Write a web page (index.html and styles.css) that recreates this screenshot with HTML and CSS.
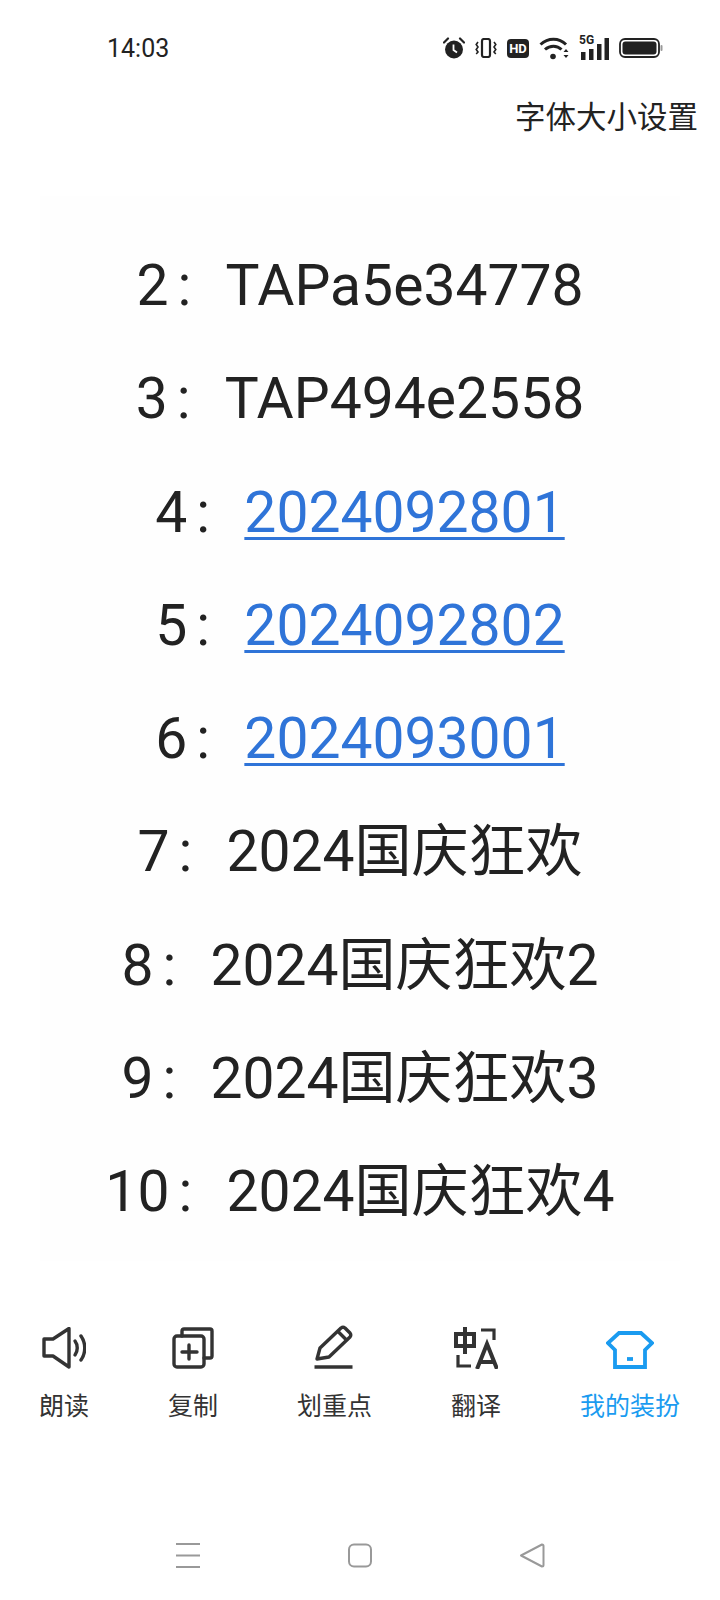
FILE: index.html
```html
<!DOCTYPE html>
<html lang="zh-CN">
<head>
    <meta charset="UTF-8">
    <meta name="viewport" content="width=device-width, initial-scale=1.0">
    <title>字体大小设置</title>
    <link rel="stylesheet" href="styles.css">
</head>
<body>
    <div class="statusbar">
        <span class="time">14:03</span>
        <div class="status-icons">
            <svg class="ico-alarm" viewBox="0 0 22 22" width="22" height="22">
                <circle cx="11" cy="12.5" r="9" fill="#222"/>
                <path d="M1 5.5 L5 1.5 M21 5.5 L17 1.5" stroke="#222" stroke-width="2.2" stroke-linecap="round"/>
                <path d="M10.5 7.5 V13 L14 15.5" stroke="#fff" stroke-width="1.8" fill="none"/>
            </svg>
            <svg class="ico-vib" viewBox="0 0 22 20" width="22" height="20">
                <rect x="7" y="1" width="8" height="18" rx="2" fill="none" stroke="#222" stroke-width="2.2"/>
                <path d="M3 4 L1.2 6.5 L3 9 L1.2 11.5 L3 14 L1.2 16 M19 4 L20.8 6.5 L19 9 L20.8 11.5 L19 14 L20.8 16" fill="none" stroke="#222" stroke-width="1.6"/>
            </svg>
            <span class="hd">HD</span>
            <svg class="ico-wifi" viewBox="0 0 30 23" width="30" height="23">
                <path d="M1.5 7.5 C9 0.5 20 0.5 27 7.5" fill="none" stroke="#222" stroke-width="3"/>
                <path d="M6 12.5 C11 8 18 8 22.5 12.5" fill="none" stroke="#222" stroke-width="3"/>
                <circle cx="14" cy="19.5" r="2.8" fill="#222"/>
                <path d="M24.5 15 L27 12 L29.5 15 Z M24.5 18 L27 21 L29.5 18 Z" fill="#222"/>
            </svg>
            <div class="signal">
                <span class="fiveg">5G</span>
                <svg viewBox="0 0 30 23" width="30" height="23">
                    <rect x="2" y="15" width="4.500" height="8" fill="#222"/>
                    <rect x="10" y="12" width="4.500" height="11" fill="#222"/>
                    <rect x="18" y="7" width="4.500" height="16" fill="#222"/>
                    <rect x="25.500" y="1" width="4.500" height="22" fill="#222"/>
                </svg>
            </div>
            <svg class="ico-batt" viewBox="0 0 45 20" width="45" height="20">
                <rect x="1" y="1" width="39" height="18" rx="5" fill="none" stroke="#222" stroke-width="1.8"/>
                <rect x="3.5" y="3.5" width="34" height="13" rx="3" fill="#222"/>
                <rect x="41.5" y="7" width="2" height="6" rx="1" fill="#999"/>
            </svg>
        </div>
    </div>

    <div class="titlebar">字体大小设置</div>

    <div class="panel">
        <div class="row">2<span class="colon">:</span><span class="val">TAPa5e34778</span></div>
        <div class="row">3<span class="colon">:</span><span class="val">TAP494e2558</span></div>
        <div class="row">4<span class="colon">:</span><a class="val link" href="#">2024092801</a></div>
        <div class="row">5<span class="colon">:</span><a class="val link" href="#">2024092802</a></div>
        <div class="row">6<span class="colon">:</span><a class="val link" href="#">2024093001</a></div>
        <div class="row">7<span class="colon">:</span><span class="val">2024国庆狂欢</span></div>
        <div class="row">8<span class="colon">:</span><span class="val">2024国庆狂欢2</span></div>
        <div class="row">9<span class="colon">:</span><span class="val">2024国庆狂欢3</span></div>
        <div class="row">10<span class="colon">:</span><span class="val">2024国庆狂欢4</span></div>
    </div>

    <div class="toolbar">
        <div class="tool">
            <svg viewBox="0 0 44 42" width="44" height="42" fill="none" stroke="#333" stroke-width="3.400" stroke-linejoin="round" stroke-linecap="round">
                <path d="M2 12 H11 L27 1.500 V40 L11 29 H2 Z"/>
                <path d="M33 14 C36 18 36 24 33 28"/>
                <path d="M39 9 C44 16 44 26 39 33"/>
            </svg>
            <span>朗读</span>
        </div>
        <div class="tool">
            <svg viewBox="0 0 42 42" width="42" height="42" fill="none" stroke="#333" stroke-width="3.400" stroke-linejoin="round" stroke-linecap="round">
                <rect x="2" y="9" width="30" height="31" rx="3"/>
                <path d="M10 9 V4 Q10 2 12 2 H38 Q40 2 40 4 V29 Q40 31 38 31 H32"/>
                <path d="M17 18 V32 M10 25 H25"/>
            </svg>
            <span>复制</span>
        </div>
        <div class="tool">
            <svg viewBox="0 0 40 44" width="40" height="44" fill="none" stroke="#333" stroke-width="3.400" stroke-linejoin="round">
                <path d="M3 34 L6 23 L27 3 Q29 1.500 31 3 L36 8 Q37.500 10 36 12 L15 32 Z"/>
                <path d="M24 6.500 L33 15.500"/>
                <path d="M0.500 42 H38.500" stroke-width="3.500"/>
            </svg>
            <span>划重点</span>
        </div>
        <div class="tool">
            <svg viewBox="0 0 44 42" width="44" height="42" fill="none" stroke="#333" stroke-width="4">
                <path d="M2 7 H20 V19 H2 Z M11 0 V27"/>
                <path d="M27 3 H40 V13" stroke-width="3.200"/>
                <path d="M4 28 V39 H17" stroke-width="3.200"/>
                <path d="M23 42 L33 17 L43 42 M26 35 H40" stroke-width="4"/>
            </svg>
            <span>翻译</span>
        </div>
        <div class="tool active">
            <svg viewBox="0 0 48 38" width="48" height="38" fill="none" stroke="#1a9bf0" stroke-width="3.800" stroke-linejoin="miter">
                <path d="M13 2 H35 L46 12 L39 19 V36 H9 V19 L2 12 Z"/>
                <path d="M21 28 H27"/>
            </svg>
            <span>我的装扮</span>
        </div>
    </div>

    <div class="navbar">
        <svg viewBox="0 0 26 25" width="26" height="25" fill="none" stroke="#999" stroke-width="2">
            <path d="M1 1 H25 M1 12.500 H25 M1 24 H25"/>
        </svg>
        <svg viewBox="0 0 26 25" width="26" height="25" fill="none" stroke="#999" stroke-width="2">
            <rect x="2" y="1.500" width="22" height="22" rx="5"/>
        </svg>
        <svg viewBox="0 0 26 25" width="26" height="25" fill="none" stroke="#999" stroke-width="2" stroke-linejoin="round">
            <path d="M2 12.500 L23 1.500 Q24.500 1.500 24.500 3 V22 Q24.500 23.500 23 23.500 Z"/>
        </svg>
    </div>
</body>
</html>
```
FILE: styles.css
```css
* {
    box-sizing: border-box;
}
body {
    margin: 0;
    width: 720px;
    height: 1600px;
    background-color: #fff;
    color: #222;
    font-family: Roboto, "Noto Sans CJK SC", sans-serif;
    display: flex;
    flex-direction: column;
}
.statusbar {
    height: 62px;
    padding: 34px 56px 0 107px;
    display: flex;
    justify-content: space-between;
    align-items: center;
}
.time {
    font-size: 25px;
}
.status-icons {
    display: flex;
    align-items: center;
    gap: 10px;
}
.hd {
    width: 22px;
    height: 19px;
    border-radius: 4px;
    background-color: #222;
    color: #fff;
    font-size: 13px;
    font-weight: 700;
    line-height: 19px;
    text-align: center;
}
.signal {
    position: relative;
    width: 30px;
    height: 23px;
}
.fiveg {
    position: absolute;
    left: 0;
    top: -3px;
    font-size: 12px;
    font-weight: 700;
    line-height: 12px;
}
.titlebar {
    margin-top: 32px;
    padding-right: 22px;
    font-size: 30.5px;
    line-height: 48px;
    text-align: right;
}
.panel {
    margin: 54px 40px 0;
    height: 1065px;
    padding-top: 33px;
    background-color: #fefefe;
}
.row {
    height: 113.3px;
    font-size: 57px;
    line-height: 113px;
    text-align: center;
    white-space: nowrap;
}
.colon {
    display: inline-block;
    width: 57px;
    padding-left: 9px;
    text-align: left;
}
.link {
    color: #2f74d8;
    text-decoration: underline;
    text-decoration-thickness: 3px;
    text-underline-offset: 5px;
}
.toolbar {
    margin-top: 64px;
    padding: 0 40px 0 39px;
    display: flex;
    justify-content: space-between;
    align-items: flex-end;
}
.tool {
    display: flex;
    flex-direction: column;
    align-items: center;
    gap: 23px;
    font-size: 25px;
    line-height: 30px;
    color: #333;
}
.tool.active {
    color: #1a9bf0;
}
.navbar {
    margin-top: 121px;
    padding: 0 175px;
    display: flex;
    justify-content: space-between;
}
```
